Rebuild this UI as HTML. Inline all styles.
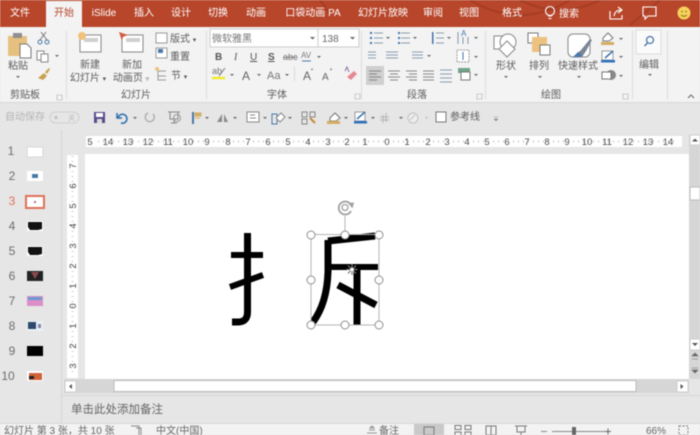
<!DOCTYPE html>
<html><head><meta charset="utf-8"><style>
html,body{margin:0;padding:0;width:700px;height:435px;overflow:hidden;background:#e6e6e6}
svg{display:block;filter:blur(.5px)}
text{font-family:"Liberation Sans","Noto Sans CJK SC",sans-serif;fill:#5c5c5c;font-size:10px}
.c{text-anchor:middle}
.t{fill:#fff;font-size:10px}
.r{font-size:9.5px;fill:#4a4a4a;text-anchor:middle}
.n{font-size:12px;fill:#6e6e6e;text-anchor:middle}
.a{fill:#666}
</style></head><body>
<svg width="700" height="435" viewBox="0 0 700 435" xmlns="http://www.w3.org/2000/svg">
<!-- title -->
<rect width="700" height="27" fill="#b8462b"/>
<g fill="none" stroke="#a63d24" stroke-width="2"><path d="M470 0Q520 30 570 0M520 0Q560 20 600 0M320 0l10 14M660 0l-30 25"/></g>
<rect x="46" y="1" width="36" height="26" fill="#f3f3f3"/>
<g class="tabs">
<text class="t c" x="20" y="16">文件</text>
<text class="c" x="64" y="16" style="fill:#b8462b">开始</text>
<text class="t c" x="104" y="16">iSlide</text>
<text class="t c" x="144" y="16">插入</text>
<text class="t c" x="181" y="16">设计</text>
<text class="t c" x="218" y="16">切换</text>
<text class="t c" x="256" y="16">动画</text>
<text class="t c" x="313" y="16">口袋动画 PA</text>
<text class="t c" x="383" y="16">幻灯片放映</text>
<text class="t c" x="433" y="16">审阅</text>
<text class="t c" x="469" y="16">视图</text>
<text class="t c" x="512" y="16">格式</text>
<text class="t c" x="569" y="17">搜索</text>
</g>
<g fill="none" stroke="#fff" stroke-width="1.1">
<circle cx="550" cy="11" r="4.500"/><path d="M548 16h4M548.500 18.500h3"/>
<path d="M610 11v8h12v-4M614 16q1-6 7-6M618 7l4 3-4 3"/>
<path d="M643 7h13v9h-8l-3 3v-3h-2z"/>
</g>
<circle cx="684" cy="13" r="6.500" fill="#f5d25a"/><circle cx="682" cy="11.500" r=".8" fill="#8a6a20"/><circle cx="686" cy="11.500" r=".8" fill="#8a6a20"/><path d="M681 15q3 2.500 6 0" stroke="#8a6a20" fill="none"/>
<!-- ribbon -->
<rect y="27" width="700" height="75" fill="#f3f3f3"/>
<rect y="102" width="700" height="1" fill="#d8d8d8"/>
<g fill="#dcdcdc"><rect x="66" y="31" width="1" height="68"/><rect x="206" y="31" width="1" height="68"/><rect x="361" y="31" width="1" height="68"/><rect x="485" y="31" width="1" height="68"/><rect x="632" y="31" width="1" height="68"/><rect x="667" y="31" width="1" height="68"/></g>
<!-- clipboard -->
<rect x="8" y="36" width="19" height="20" fill="#e6c07f"/><rect x="13" y="33" width="9" height="5" fill="#8f8f8f"/>
<path d="M20 44h7l4 4v10H20z" fill="#fff" stroke="#777"/>
<text class="c" x="18" y="69">粘贴</text><path d="M16 76h4l-2 2z" class="a"/>
<g fill="none" stroke="#4a78a8"><circle cx="40" cy="42" r="2"/><circle cx="47" cy="42" r="2"/><path d="M40 40l6-8M47 40l-6-8" stroke="#777"/></g>
<g fill="#fff" stroke="#888"><rect x="37" y="51" width="7" height="9"/><rect x="41" y="54" width="7" height="8"/></g><path d="M55 55h4l-2 2z" class="a"/>
<path d="M38 78l6-5 3 3-4 4zM45 72l4-4 1 1-3 5z" fill="#c9a04e"/>
<text class="c" x="25" y="98">剪贴板</text>
<path d="M57 95h5v5h-5z" fill="none" stroke="#aaa" stroke-width=".6"/>
<!-- slides -->
<rect x="80" y="35" width="21" height="17" fill="#fff" stroke="#888"/><rect x="84" y="38" width="14" height="4" fill="#cfcfcf"/><circle cx="82" cy="36" r="4" fill="#f1c27a"/>
<text class="c" x="90" y="68">新建</text><text class="c" x="88" y="81">幻灯片 <tspan font-size="7">▾</tspan></text>
<rect x="122" y="35" width="21" height="17" fill="#fff" stroke="#888"/><rect x="126" y="38" width="14" height="4" fill="#cfcfcf"/><path d="M119 32l9 3-5 2-1 4z" fill="#d05c42"/>
<text class="c" x="132" y="68">新加</text><text class="c" x="131" y="81">动画页 <tspan font-size="7">▿</tspan></text>
<g fill="#fff" stroke="#999"><rect x="156" y="33" width="11" height="10"/><rect x="156" y="48" width="11" height="10"/></g>
<rect x="158" y="49" width="5" height="4" fill="#4a78a8"/>
<path d="M158 71h8M158 76h8M158 71v9h8" fill="none" stroke="#999"/><circle cx="157" cy="69" r="2" fill="#f1c27a"/>
<text x="170" y="42">版式 <tspan font-size="7">▾</tspan></text><text x="170" y="60">重置</text><text x="171" y="79">节 <tspan font-size="7">▾</tspan></text>
<text class="c" x="136" y="98">幻灯片</text>
<!-- font -->
<rect x="210" y="29" width="108" height="18" fill="#fff" stroke="#ccc"/><rect x="318" y="29" width="41" height="18" fill="#fff" stroke="#ccc"/>
<text x="212" y="42" style="fill:#777">微软雅黑</text><text x="322" y="42" style="fill:#666">138</text>
<path d="M310 37h5l-2.500 2.500zM350 37h5l-2.500 2.500z" class="a"/>
<g style="font-size:10px"><text x="215" y="60" style="font-weight:bold;fill:#555;font-size:10px">B</text><text x="234" y="60" style="font-style:italic;fill:#555;font-family:'Liberation Serif'">I</text><text x="250" y="60" style="fill:#555;text-decoration:underline">U</text><text x="268" y="60" style="fill:#555;font-weight:bold;text-decoration:underline">S</text><text x="283" y="60" style="fill:#777;text-decoration:line-through;font-size:9px">abc</text><text x="301" y="58" style="fill:#777;font-size:8px">AV</text></g>
<path d="M302 61h9" stroke="#4a78a8" fill="none"/><path d="M317 56h4l-2 2z" class="a"/>
<text x="212" y="74" style="font-size:9px;fill:#777">ab</text><path d="M212 78h13" stroke="#f3e92c" stroke-width="2.500"/><path d="M219 76l6-8" stroke="#777"/>
<path d="M230 74h4l-2 2zM257 74h4l-2 2zM285 74h4l-2 2z" class="a"/>
<text x="242" y="80" style="font-size:12px;fill:#666">A</text><text x="267" y="79" style="font-size:11px;fill:#777">Aa</text>
<rect x="294" y="66" width="1" height="15" fill="#d8d8d8"/>
<text x="303" y="80" style="font-size:12px;fill:#666">A</text><text x="322" y="80" style="font-size:10px;fill:#666">A</text>
<path d="M311 70l1-2 1 2zM330 70l1-2 1 2z" fill="#666"/>
<path d="M347 77l7-6 3 3-6 6z" fill="#e58a93"/><path d="M345 71l2-4 2 5" fill="none" stroke="#8d6a9a"/>
<text class="c" x="277" y="98">字体</text>
<path d="M355 94h5v5h-5z" fill="none" stroke="#aaa" stroke-width=".6"/>
<!-- paragraph -->
<g fill="none" stroke="#8a9bb0" stroke-width="1.100">
<path d="M374 33h9M374 38h9M374 43h9M401 33h9M401 38h9M401 43h9M436 33h8M436 38h8M436 43h8M458 32v12M463 37v7M468 37v7M368 52h8M368 55h8M368 58h8M386 52h12M386 55h12M386 58h12M412 52h11M412 55h11M412 58h11"/>
</g>
<g fill="#3f73ad"><rect x="370" y="32" width="2" height="2"/><rect x="370" y="37" width="2" height="2"/><rect x="370" y="42" width="2" height="2"/><rect x="398" y="32" width="2" height="2"/><rect x="398" y="37" width="2" height="2"/><rect x="398" y="42" width="2" height="2"/><rect x="432" y="32" width="1.500" height="12"/></g>
<text x="461" y="36" style="font-size:8px;fill:#3f73ad">A</text>
<path d="M386 37h4l-2 2zM413 37h4l-2 2zM447 37h4l-2 2zM474 37h4l-2 2zM427 55h4l-2 2zM474 56h4l-2 2zM474 74h4l-2 2z" class="a"/>
<rect x="457" y="50" width="12" height="12" fill="#fff" stroke="#999" stroke-dasharray="2 1"/><path d="M463 52v8" stroke="#3f73ad"/>
<rect x="366" y="66" width="18" height="19" fill="#cfcfcf"/>
<g fill="none" stroke="#888"><path d="M369 71h12M369 74h8M369 77h12M369 80h8M388 71h12M390 74h8M388 77h12M390 80h8M406 71h11M409 74h8M406 77h11M409 80h8M423 71h11M423 74h11M423 77h11M423 80h11"/><path d="M440 70h12M440 74h12M440 78h12M440 82h12" stroke="#8a9bb0"/></g>
<path d="M458 68h12v5h-12z" fill="#6fa58a"/><rect x="461" y="72" width="9" height="8" fill="#fff" stroke="#777"/>
<text class="c" x="417" y="98">段落</text>
<path d="M477 94h5v5h-5z" fill="none" stroke="#aaa" stroke-width=".6"/>
<!-- drawing -->
<g fill="#fff" stroke="#888"><rect x="494" y="36" width="13" height="13"/><circle cx="508" cy="42" r="8"/><path d="M499 49l8-8 8 8-8 8z"/></g>
<text class="c" x="506" y="69">形状</text><path d="M504 76h4l-2 2zM538 76h4l-2 2zM577 76h4l-2 2z" class="a"/>
<rect x="528" y="33" width="10" height="10" fill="#fff" stroke="#777"/><rect x="532" y="37" width="15" height="15" fill="#edc17f"/><rect x="540" y="45" width="10" height="10" fill="#fff" stroke="#777"/>
<text class="c" x="539" y="69">排列</text>
<rect x="568" y="34" width="22" height="23" rx="5" fill="#fff" stroke="#888"/><path d="M573 57l8-7 9-11 2 1-6 11-4 6z" fill="#7a8596"/><path d="M573 57l5-5 4 3-2 2z" fill="#4a78a8"/>
<text class="c" x="578" y="69">快速样式</text>
<path d="M603 38l5-5 5 5-4 3h-6z" fill="#fff" stroke="#777"/><rect x="601" y="42" width="13" height="3" fill="#d3ad62"/>
<path d="M602 51h11v9h-11z" fill="#fff" stroke="#999"/><path d="M605 58l8-7" stroke="#3f73ad" stroke-width="1.500"/><rect x="601" y="60" width="14" height="2.500" fill="#2f72bd"/>
<circle cx="611" cy="75" r="5" fill="#888"/><rect x="602" y="72" width="9" height="7" fill="#fff" stroke="#777"/>
<path d="M619 38h4l-2 2zM619 56h4l-2 2zM619 75h4l-2 2z" class="a"/>
<text class="c" x="551" y="98">绘图</text>
<path d="M623 94h5v5h-5z" fill="none" stroke="#aaa" stroke-width=".6"/>
<rect x="636" y="30" width="25" height="24" fill="#fafafa" stroke="#ddd"/><circle cx="650" cy="40" r="3.500" fill="none" stroke="#4a78a8" stroke-width="1.300"/><path d="M647.500 43l-3 3" stroke="#4a78a8" stroke-width="1.500"/>
<text class="c" x="649" y="68">编辑</text><path d="M648 74h4l-2 2z" class="a"/>
<path d="M688 98l3-3 3 3" fill="none" stroke="#666"/>
<!-- QAT -->
<text x="5" y="120" style="fill:#b5b5b5">自动保存</text>
<rect x="50" y="112" width="29" height="11" rx="5.500" fill="none" stroke="#cfcfcf"/><circle cx="56" cy="117.500" r="1.500" fill="#bbb"/><text x="68" y="120" style="font-size:7px;fill:#bbb">关</text>
<rect x="94" y="112" width="11" height="11" fill="#5a4a8c"/><rect x="96" y="113" width="7" height="4" fill="#fff"/><rect x="97" y="119" width="5" height="4" fill="#ddd"/>
<path d="M118 118a4.500 4.500 0 1 1 3 5M117 113v5h5" fill="none" stroke="#2b6fad" stroke-width="1.500"/>
<path d="M133 117h4l-2 2zM205 117h4l-2 2zM233 117h4l-2 2zM263 117h4l-2 2zM288 117h4l-2 2zM344 117h4l-2 2zM371 117h4l-2 2zM399 117h4l-2 2z" class="a"/>
<path d="M148 113a4.500 4.500 0 1 0 5 1" fill="none" stroke="#aaa" stroke-width="1.300"/>
<path d="M168 112h12M170 112v7h8v-7M174 119v4M171 123h6" fill="none" stroke="#888"/><circle cx="177" cy="118" r="3.500" fill="none" stroke="#999"/>
<rect x="192" y="112" width="2" height="12" fill="#4a78a8"/><path d="M195 113h6v3h-6zM195 118h5" fill="#d3ad62" stroke="#d3ad62"/>
<path d="M217 122l5-8v8zM224 114l4 8h-4z" fill="#8a8a8a"/>
<rect x="247" y="112" width="12" height="10" fill="#fff" stroke="#888"/><path d="M250 115h5M250 118h6" stroke="#888"/>
<path d="M272 114h5v10h-5z" fill="none" stroke="#4a78a8"/><path d="M276 118l5-5 4 4-5 5z" fill="#fff" stroke="#888"/>
<path d="M302 112h5v5h-5zM310 112h5v5h-5zM302 119h5v5h-5z" fill="none" stroke="#888"/><path d="M310 118l5 5" stroke="#c28a3a" stroke-width="2"/>
<path d="M330 118l5-5 5 5-4 3h-6z" fill="#fff" stroke="#777"/><rect x="327" y="121" width="13" height="3" fill="#d3ad62"/>
<path d="M355 112h10v9h-10z" fill="#fff" stroke="#999"/><path d="M357 119l8-7" stroke="#3f73ad" stroke-width="1.500"/><rect x="354" y="121" width="13" height="2.500" fill="#2f72bd"/>
<path d="M383 115v8M380 117h9M386 113v9M380 120h9" stroke="#b5b5b5" fill="none"/>
<circle cx="413" cy="118" r="5" fill="#eee" stroke="#c0c0c0"/><path d="M410 120l5-5" stroke="#c0c0c0"/><path d="M425 117h3l-1.500 2z" fill="#bbb"/>
<rect x="436" y="112" width="10" height="10" fill="#fff" stroke="#777"/><text x="450" y="120">参考线</text>
<path d="M494 117h4M494 119h4l-2 2z" fill="#888" stroke="#888" stroke-width=".5"/>
<!-- rulers -->
<rect x="86" y="136" width="596" height="11" fill="#fff"/>
<g class="hr">
<text class="r" x="90" y="145">5</text><text class="r" x="108" y="145">14</text><text class="r" x="128" y="145">13</text><text class="r" x="148" y="145">12</text><text class="r" x="168" y="145">11</text><text class="r" x="188" y="145">10</text><text class="r" x="207" y="145">9</text><text class="r" x="228" y="145">8</text><text class="r" x="248" y="145">7</text><text class="r" x="268" y="145">6</text><text class="r" x="288" y="145">5</text><text class="r" x="308" y="145">4</text><text class="r" x="328" y="145">3</text><text class="r" x="347" y="145">2</text><text class="r" x="365" y="145">1</text><text class="r" x="387" y="145">0</text><text class="r" x="407" y="145">1</text><text class="r" x="428" y="145">2</text><text class="r" x="447" y="145">3</text><text class="r" x="467" y="145">4</text><text class="r" x="487" y="145">5</text><text class="r" x="507" y="145">6</text><text class="r" x="527" y="145">7</text><text class="r" x="547" y="145">8</text><text class="r" x="567" y="145">9</text><text class="r" x="587" y="145">10</text><text class="r" x="607" y="145">11</text><text class="r" x="628" y="145">12</text><text class="r" x="648" y="145">13</text><text class="r" x="668" y="145">14</text>
</g>
<path d="M98 141.500H678" stroke="#888" stroke-dasharray="1 4" stroke-width="2" fill="none" opacity=".5"/>
<rect x="67" y="155" width="11" height="223" fill="#fff"/>
<g>
<text class="r" transform="translate(76 166) rotate(-90)">7</text><text class="r" transform="translate(76 186) rotate(-90)">6</text><text class="r" transform="translate(76 206) rotate(-90)">5</text><text class="r" transform="translate(76 226) rotate(-90)">4</text><text class="r" transform="translate(76 246) rotate(-90)">3</text><text class="r" transform="translate(76 266) rotate(-90)">2</text><text class="r" transform="translate(76 286) rotate(-90)">1</text><text class="r" transform="translate(76 306) rotate(-90)">0</text><text class="r" transform="translate(76 326) rotate(-90)">1</text><text class="r" transform="translate(76 346) rotate(-90)">2</text><text class="r" transform="translate(76 366) rotate(-90)">3</text>
</g>
<path d="M72.500 156V376" stroke="#888" stroke-dasharray="1 4" stroke-width="2" fill="none" opacity=".4"/>
<rect x="61" y="130" width="1" height="295" fill="#d6d6d6"/>
<!-- slide -->
<rect x="85" y="154" width="604" height="225" fill="#fff"/>
<g fill="none" stroke="#000">
<path d="M247.500 233V312Q247.500 322 238 322H232" stroke-width="7"/>
<path d="M231 255H263" stroke-width="6"/>
<path d="M230 287L263 275" stroke-width="6"/>
<path d="M328 241L375 236" stroke-width="7"/>
<path d="M328 240V272Q327 303 313 322" stroke-width="7"/>
<path d="M330 267H378" stroke-width="6"/>
<path d="M338 285L376 305" stroke-width="7"/>
<path d="M357 268V325" stroke-width="7"/>
</g>
<rect x="311" y="234.500" width="68" height="90.500" fill="none" stroke="#b5b5b5"/>
<path d="M345 234V216" stroke="#b5b5b5"/>
<g fill="#fff" stroke="#8f8f8f"><circle cx="311" cy="235" r="4"/><circle cx="345" cy="235" r="4"/><circle cx="379" cy="235" r="4"/><circle cx="311" cy="280" r="4"/><circle cx="379" cy="280" r="4"/><circle cx="311" cy="325" r="4"/><circle cx="345" cy="325" r="4"/><circle cx="379" cy="325" r="4"/></g>
<g fill="none" stroke="#a0a0a0" stroke-width="1.800"><path d="M351 205a6.500 6.500 0 1 0 0 6"/><circle cx="345" cy="207.500" r="3" stroke-width="1.300"/></g><path d="M348 203l6-.5-1.500 6z" fill="#a0a0a0"/>
<g stroke="#777" stroke-width="1.200"><path d="M352 264v11M346.500 269.500h11M348 265.500l8 8M356 265.500l-8 8"/></g><circle cx="352" cy="269.500" r="1.800" fill="#fff"/>
<!-- right scrollbar -->
<rect x="689" y="135" width="11" height="244" fill="#d6d6d6"/>
<rect x="690" y="135" width="10" height="10" fill="#fff" stroke="#ccc"/><path d="M692 141.500l3-3 3 3z" fill="#555"/>
<rect x="690" y="187" width="10" height="13" fill="#fff" stroke="#bbb"/>
<rect x="690" y="339" width="10" height="11" fill="#fff" stroke="#ccc"/><path d="M692 343l3 3 3-3z" fill="#555"/>
<path d="M692 356l3-3 3 3zM692 359h6" fill="#666" stroke="#666" stroke-width=".6"/><path d="M692 368h6M692 370l3 3 3-3z" fill="#666" stroke="#666" stroke-width=".6"/>
<!-- h scrollbar -->
<rect x="64" y="379" width="625" height="14" fill="#d6d6d6"/>
<rect x="65" y="381" width="11" height="11" fill="#fff" stroke="#ccc"/><path d="M72 384l-3 2.500 3 2.500z" fill="#555"/>
<rect x="114" y="380.500" width="522" height="11" fill="#fff" stroke="#bbb"/>
<rect x="677" y="381" width="11" height="11" fill="#fff" stroke="#ccc"/><path d="M680.500 384l3 2.500-3 2.500z" fill="#555"/>
<rect x="62" y="395" width="638" height="1" fill="#d6d6d6"/>
<text x="71" y="413" style="font-size:11.500px;fill:#666">单击此处添加备注</text>
<!-- thumbnails -->
<text class="n" x="11" y="155">1</text><text class="n" x="12" y="180">2</text><text class="n" x="12" y="205" style="fill:#e0705a">3</text><text class="n" x="12" y="230">4</text><text class="n" x="12" y="255">5</text><text class="n" x="12" y="280">6</text><text class="n" x="12" y="305">7</text><text class="n" x="12" y="330">8</text><text class="n" x="12" y="355">9</text><text class="n" x="8" y="380">10</text>
<rect x="27" y="147" width="16" height="10" fill="#fff" stroke="#d6d6d6"/>
<rect x="27" y="171" width="16" height="10" fill="#fff"/><rect x="32" y="174" width="6" height="4" fill="#4a78a8"/>
<rect x="26" y="196" width="18" height="12" fill="#fff" stroke="#e0705a" stroke-width="2"/><rect x="34" y="201" width="2" height="2" fill="#b06aa0"/>
<rect x="27" y="221" width="16" height="10" fill="#fff"/><path d="M28 222h14v7l-4 1h-8l-2-3z" fill="#111"/>
<rect x="27" y="246" width="16" height="10" fill="#fff"/><path d="M28 247h14v7l-4 1h-8l-2-3z" fill="#111"/>
<rect x="27" y="271" width="16" height="10" fill="#222"/><path d="M31 272l4 7 4-7z" fill="#8a4a4a"/>
<rect x="27" y="296" width="16" height="10" fill="#dc8ec8"/><rect x="28" y="297" width="14" height="3" fill="#6a9ad0"/>
<rect x="27" y="321" width="16" height="10" fill="#eaf0f6"/><rect x="28" y="322" width="8" height="7" fill="#2c4a6a"/><rect x="38" y="324" width="3" height="4" fill="#88a"/>
<rect x="27" y="346" width="16" height="10" fill="#000"/>
<rect x="27" y="371" width="16" height="10" fill="#fff"/><rect x="29" y="373" width="13" height="7" fill="#d0623a"/><rect x="29" y="376" width="5" height="3" fill="#222"/>
<!-- status -->
<rect y="424" width="700" height="11" fill="#f3f3f3"/><rect y="423" width="700" height="1" fill="#d8d8d8"/>
<rect x="414" y="424" width="30" height="11" fill="#c9c9c9"/>
<text x="4" y="434" style="font-size:10px;fill:#666">幻灯片 第 3 张，共 10 张</text>
<path d="M131 426h8v9M136 428h5v7" fill="none" stroke="#888"/>
<text x="156" y="434" style="font-size:10px;fill:#666">中文(中国)</text>
<path d="M369 430h6M367 433h10M372 426l-2 2h4z" fill="none" stroke="#777" stroke-width=".8"/>
<text x="379" y="434" style="font-size:10px;fill:#666">备注</text>
<g fill="none" stroke="#777"><rect x="424" y="427" width="10" height="8"/><rect x="455" y="425.500" width="6" height="4"/><rect x="465" y="425.500" width="6" height="4"/><rect x="455" y="432" width="6" height="4"/><rect x="465" y="432" width="6" height="4"/><rect x="486" y="426" width="10" height="9"/><path d="M491 426v9"/><path d="M515 426h12M517 426v6h8v-6M521 432v3"/></g>
<path d="M541 431.500h6M552 431.500h54" stroke="#888" fill="none"/><rect x="572" y="427" width="4" height="8" fill="#666"/><path d="M628 431.500h-6M625 428.500v6" stroke="#666" fill="none" transform="translate(-17)"/>
<text x="646" y="434" style="font-size:10px;fill:#666">66%</text>
<rect x="679" y="426" width="9" height="9" fill="none" stroke="#777" stroke-dasharray="2 1.500"/>
</svg>
</body></html>
